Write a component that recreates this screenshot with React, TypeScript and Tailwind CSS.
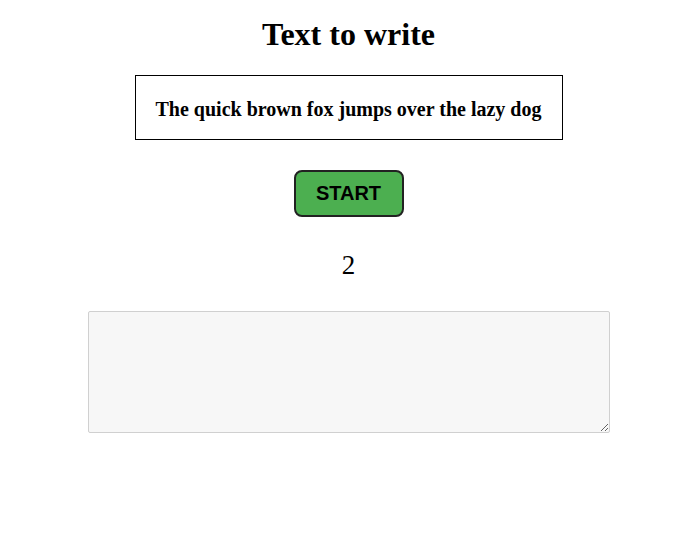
export default function App() {
  return (
    <div className="flex flex-col items-center bg-white min-h-[547px] text-black" style={{ fontFamily: '"Liberation Serif", serif' }}>
      <h1 className="mt-[16px] text-[32px] font-bold leading-[37px] font-['Liberation_Serif',serif]">Text to write</h1>
      <div className="mt-[22px] w-[428px] h-[65px] border border-black flex items-center justify-center pt-[2px]">
        <span className="text-[20px] font-bold font-['Liberation_Serif',serif]">The quick brown fox jumps over the lazy dog</span>
      </div>
      <button className="mt-[30px] w-[110px] h-[47px] bg-[#4caf50] border-2 border-[#222] rounded-[8px] pb-[1px] text-[20px] font-bold font-['Liberation_Sans',sans-serif] text-black">
        START
      </button>
      <div className="mt-[33px] text-[27px] leading-[31px] font-['Liberation_Serif',serif]">2</div>
      <textarea className="mt-[30px] w-[522px] h-[122px] bg-[#f7f7f7] border border-[#d0d0d0] rounded-[2px] resize-y block outline-none" />
    </div>
  );
}
